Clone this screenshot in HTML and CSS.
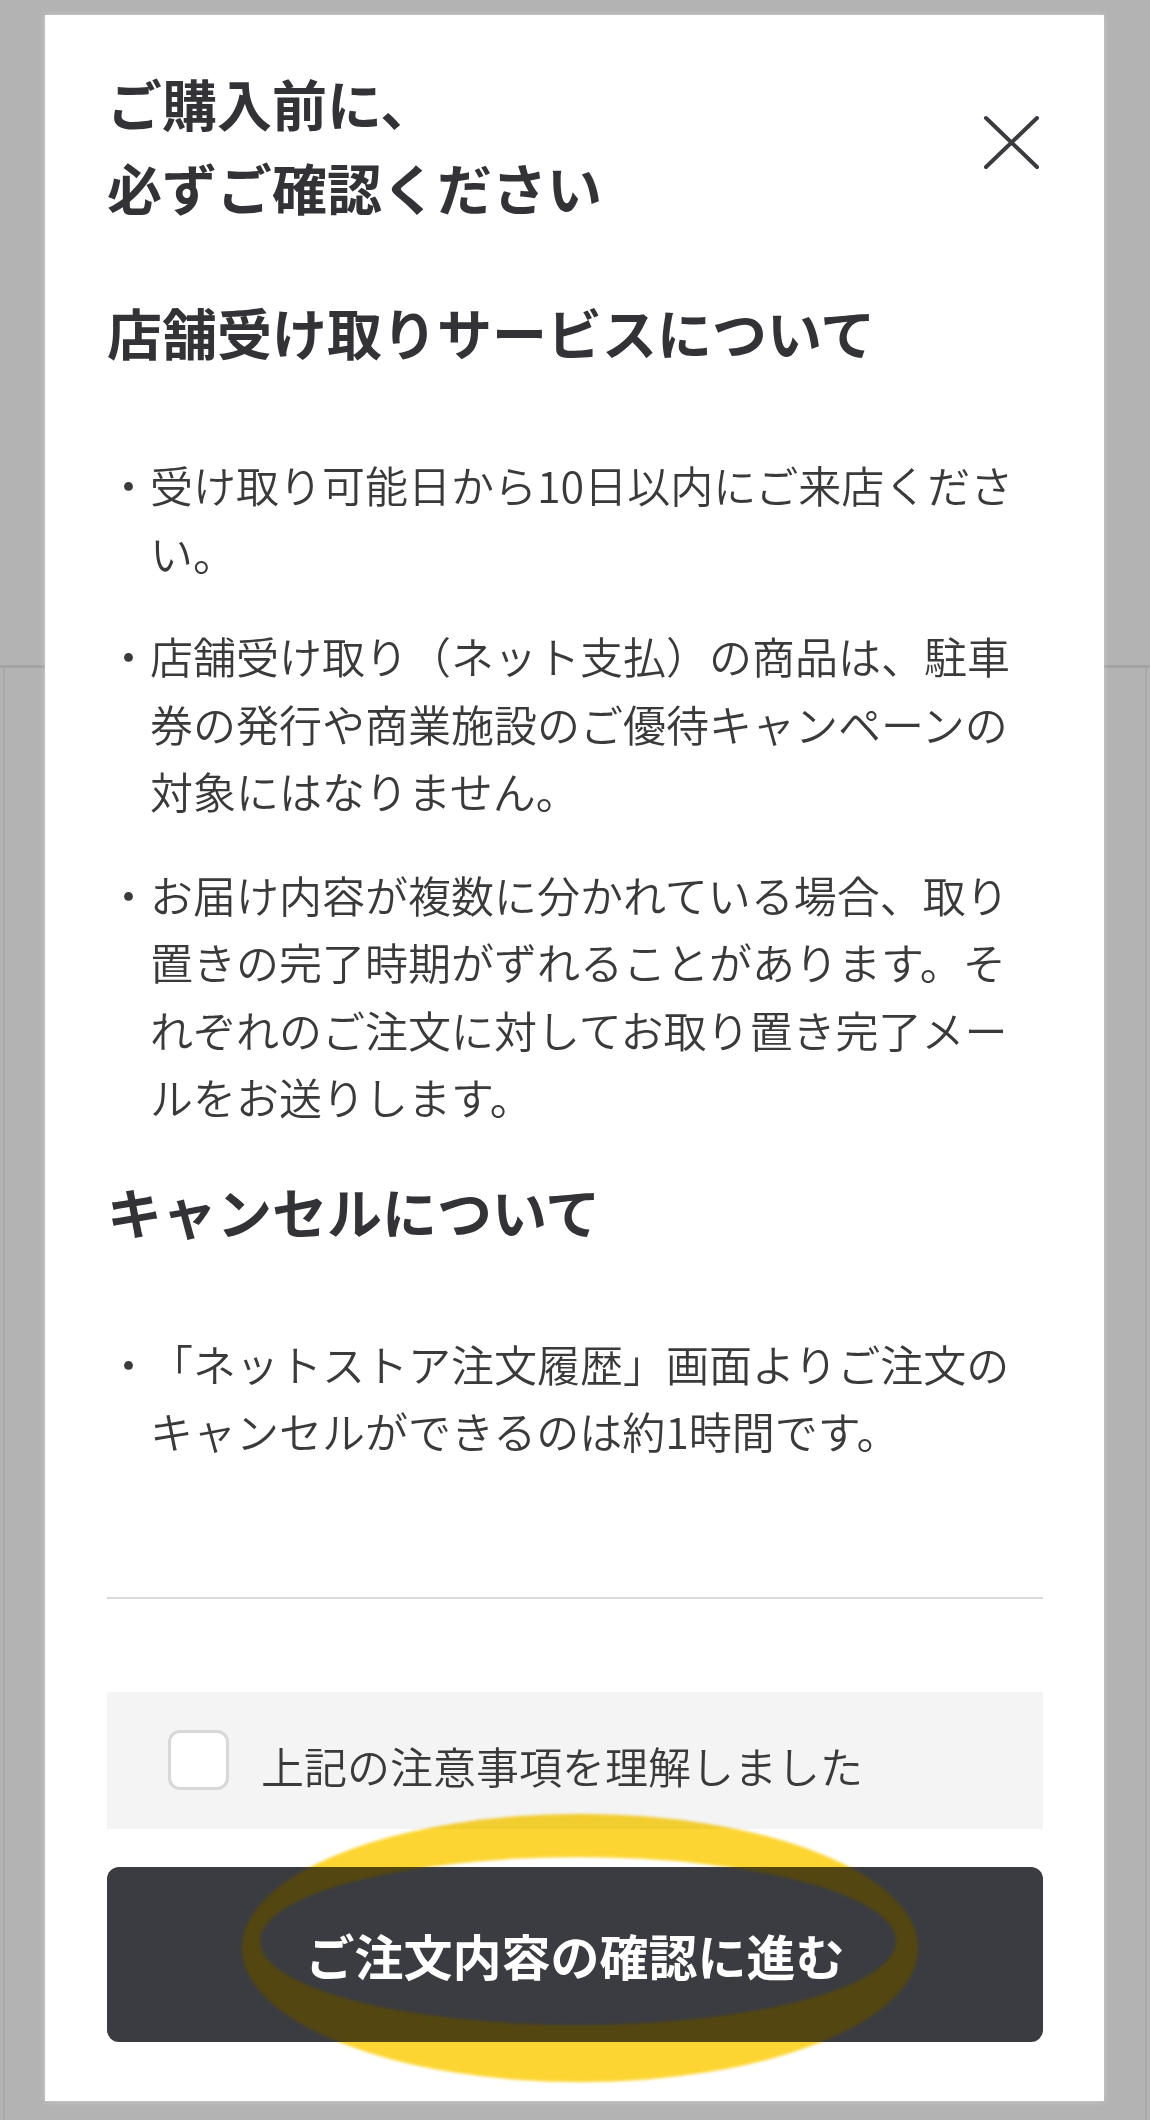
FILE: index.html
```html
<!DOCTYPE html>
<html lang="ja">
<head>
    <meta charset="UTF-8">
    <meta name="viewport" content="width=device-width, initial-scale=1.0">
    <title>ご購入前に、必ずご確認ください</title>
    <link rel="stylesheet" href="styles.css">
</head>
<body>
    <div class="page-behind">
        <div class="page-card">
            <div class="page-card-inner"></div>
        </div>
    </div>

    <div class="modal" role="dialog" aria-labelledby="modal-title">
        <div class="modal-head">
            <h1 class="modal-title" id="modal-title">ご購入前に、<br>必ずご確認ください</h1>
            <button class="close-btn" type="button" aria-label="閉じる">
                <svg width="60" height="60" viewBox="0 0 60 60">
                    <path d="M3 5 L54 54 M54 5 L3 54" stroke="#3a3a3f" stroke-width="4" stroke-linecap="round" fill="none"/>
                </svg>
            </button>
        </div>

        <h2 class="section-title first">店舗受け取りサービスについて</h2>
        <ul class="notes">
            <li>・受け取り可能日から10日以内にご来店ください。</li>
            <li>・店舗受け取り（ネット支払）の商品は、駐車券の発行や商業施設のご優待キャンペーンの対象にはなりません。</li>
            <li>・お届け内容が複数に分かれている場合、取り置きの完了時期がずれることがあります。それぞれのご注文に対してお取り置き完了メールをお送りします。</li>
        </ul>

        <h2 class="section-title">キャンセルについて</h2>
        <ul class="notes">
            <li>・「ネットストア注文履歴」画面よりご注文のキャンセルができるのは約1時間です。</li>
        </ul>

        <hr class="divider">

        <label class="agree">
            <input class="agree-check" type="checkbox">
            <span class="agree-text">上記の注意事項を理解しました</span>
        </label>

        <button class="submit-btn" type="button">ご注文内容の確認に進む</button>
    </div>

    <!-- marker drawn over the screenshot -->
    <svg class="highlight" width="1150" height="320" viewBox="0 1790 1150 320">
        <defs>
            <filter id="soft" x="-5%" y="-10%" width="110%" height="120%">
                <feGaussianBlur stdDeviation="1.6"/>
            </filter>
            <path id="ring" fill-rule="evenodd"
                  d="M242 1948 a338 134 0 1 0 676 0 a338 134 0 1 0 -676 0 Z
                     M260 1941 a318 84 0 1 0 636 0 a318 84 0 1 0 -636 0 Z"/>
        </defs>
        <use href="#ring" fill="#fcd530" filter="url(#soft)"/>
    </svg>
    <svg class="highlight tint" width="1150" height="320" viewBox="0 1790 1150 320">
        <use href="#ring" fill="#fcd530" filter="url(#soft)"/>
    </svg>
</body>
</html>
```

FILE: styles.css
```css
* {
    margin: 0;
    padding: 0;
    box-sizing: border-box;
}

body {
    width: 1150px;
    height: 2120px;
    background-color: #b3b3b3;
    font-family: "Noto Sans CJK JP", "Noto Sans", sans-serif;
    color: #3a3a3a;
    position: relative;
    overflow: hidden;
    text-spacing-trim: space-all;
}

/* page under the dimmed overlay */
.page-behind {
    padding-top: 665px;
}

.page-card {
    border-top: 3px solid #a3a3a3;
    padding: 0 3px;
}

.page-card-inner {
    height: 1452px;
    border-left: 2px solid #a9a9a9;
    border-right: 2px solid #a9a9a9;
}

.modal {
    position: absolute;
    top: 15px;
    left: 45px;
    width: 1059px;
    background: #fff;
    padding: 45px 61px 59px 62px;
    box-shadow: 0 0 6px rgba(255, 255, 255, 0.35);
}

.modal-head {
    display: flex;
    align-items: center;
    justify-content: space-between;
}

.modal-title {
    font-size: 55px;
    font-weight: 700;
    line-height: 84px;
    color: #333337;
}

.close-btn {
    width: 60px;
    height: 60px;
    background: none;
    border: 0;
    cursor: pointer;
    display: flex;
    margin-top: -2px;
}

.section-title {
    font-size: 55px;
    font-weight: 700;
    line-height: 80px;
    color: #333337;
    margin-top: 39px;
}

.section-title.first {
    margin-top: 63px;
}

.notes {
    list-style: none;
    margin-top: 80px;
    display: flex;
    flex-direction: column;
    gap: 36px;
}

.notes li {
    font-size: 43px;
    font-weight: 350;
    line-height: 67.5px;
    padding-left: 1em;
    text-indent: -1em;
}

.divider {
    border: 0;
    height: 2px;
    background: #d9d9d9;
    margin-top: 132px;
}

.agree {
    display: flex;
    align-items: center;
    gap: 32px;
    height: 137px;
    margin-top: 93px;
    padding-left: 61px;
    background: #f4f4f4;
    cursor: pointer;
}

.agree-check {
    appearance: none;
    -webkit-appearance: none;
    width: 61px;
    height: 60px;
    background: #fff;
    border: 3px solid #d8d8d8;
    border-radius: 12px;
    flex-shrink: 0;
}

.agree-text {
    font-size: 43px;
    font-weight: 350;
    line-height: 60px;
    margin-top: 10px;
    color: #3a3a3a;
}

.submit-btn {
    display: flex;
    align-items: center;
    justify-content: center;
    width: 100%;
    height: 175px;
    margin-top: 38px;
    background: #3b3c41;
    color: #fff;
    border: 0;
    border-radius: 12px;
    font-family: inherit;
    font-size: 49px;
    font-weight: 700;
    cursor: pointer;
}

.highlight {
    position: absolute;
    left: 0;
    top: 1790px;
    pointer-events: none;
    mix-blend-mode: multiply;
}

.highlight.tint {
    mix-blend-mode: normal;
    opacity: 0.12;
}
```
